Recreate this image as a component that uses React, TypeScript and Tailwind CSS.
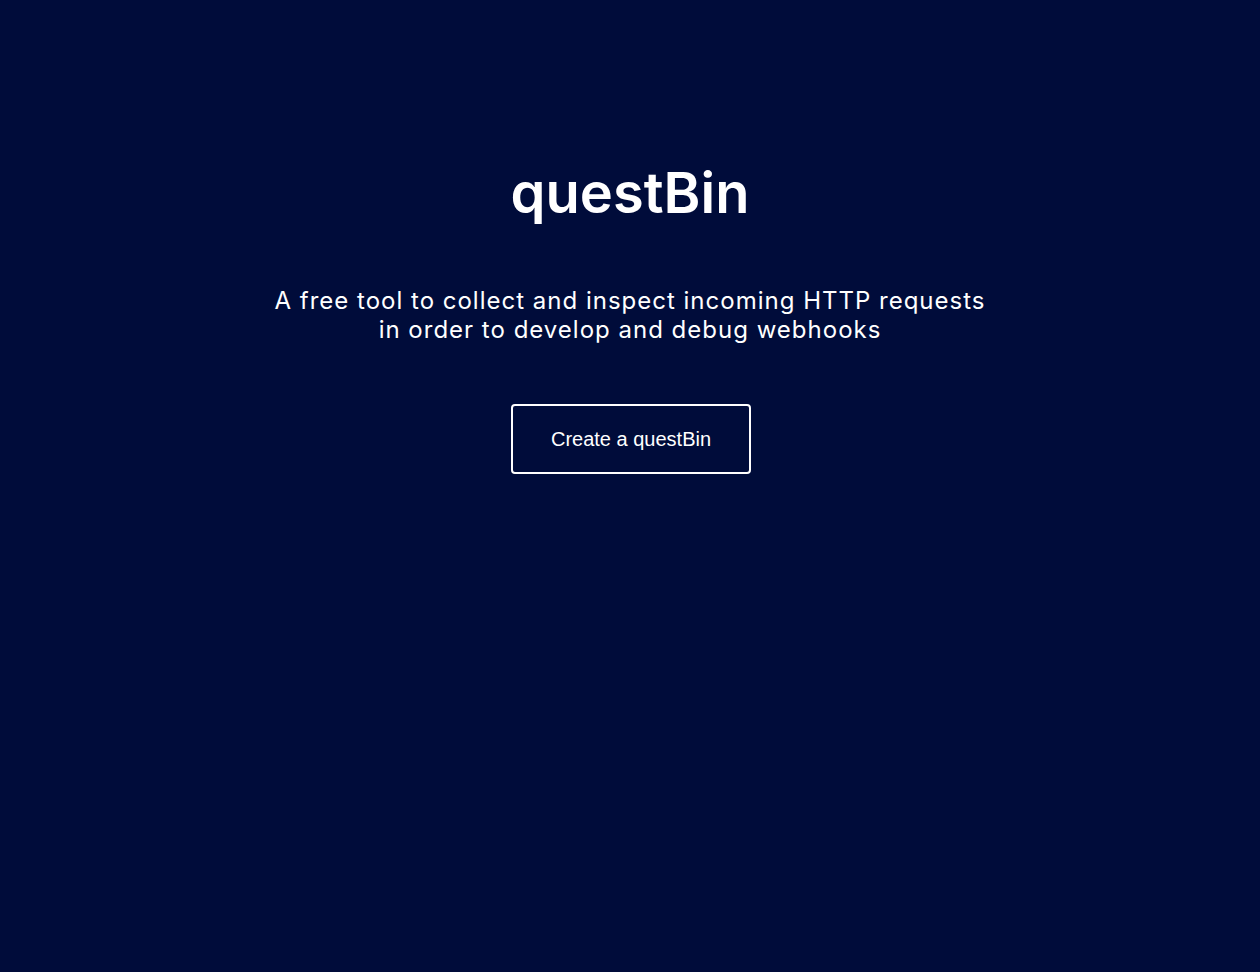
export default function App() {
  return (
    <main className="min-h-screen w-full bg-[#000c3a] text-white flex flex-col items-center">
      <h1 className="mt-[158px] text-[56px] leading-[70px] font-semibold font-['Inter',sans-serif] tracking-[0px]">
        questBin
      </h1>
      <p className="mt-[58px] text-center text-[24px] leading-[29px] font-['Inter',sans-serif] tracking-[1px]">
        A free tool to collect and inspect incoming HTTP requests
        <br />
        in order to develop and debug webhooks
      </p>
      <button className="mt-[60px] ml-[2px] w-[240px] h-[70px] border-2 border-white rounded-[4px] text-[20px] font-['Liberation_Sans',sans-serif]">
        Create a questBin
      </button>
    </main>
  )
}
